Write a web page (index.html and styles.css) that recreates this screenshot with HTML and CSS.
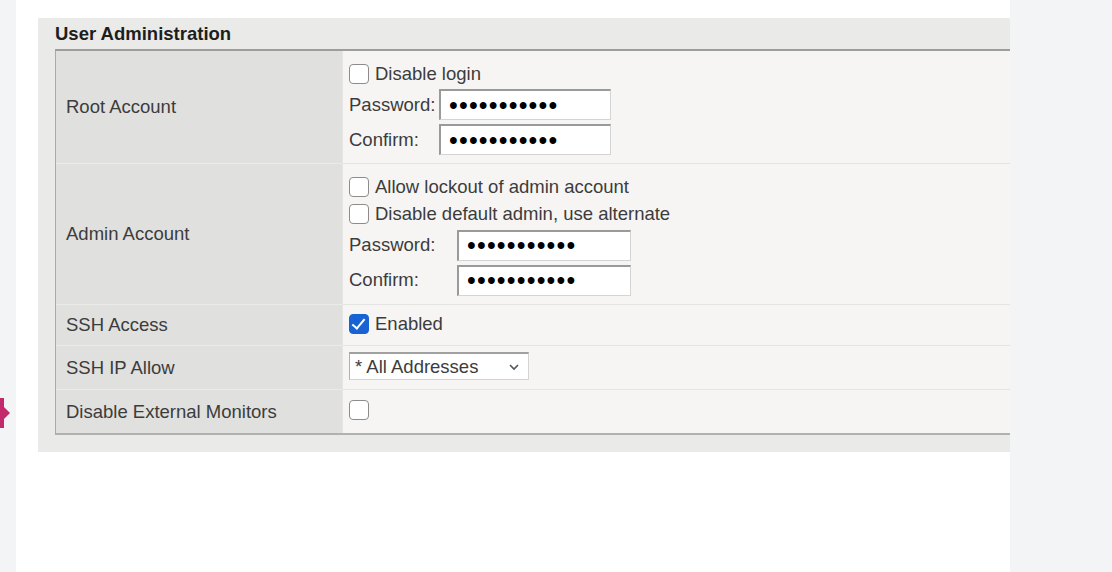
FILE: index.html
```html
<!DOCTYPE html>
<html lang="en">
<head>
    <meta charset="UTF-8">
    <title>User Administration</title>
    <link rel="stylesheet" href="styles.css">
</head>
<body>
    <div class="side-strip">
        <div class="marker">
            <span class="marker-bar"></span>
            <span class="marker-arrow"></span>
        </div>
    </div>
    <div class="main">
        <div class="panel">
            <div class="panel-title">User Administration</div>
            <div class="form-table">
                <div class="label-cell">Root Account</div>
                <div class="value-cell">
                    <label class="check-line"><input type="checkbox" class="check"> Disable login</label>
                    <div class="pw-line root"><span class="pw-label">Password:</span><input type="password" class="pw-input" value="secretpass1"></div>
                    <div class="pw-line root"><span class="pw-label">Confirm:</span><input type="password" class="pw-input" value="secretpass1"></div>
                </div>

                <div class="label-cell">Admin Account</div>
                <div class="value-cell">
                    <label class="check-line"><input type="checkbox" class="check"> Allow lockout of admin account</label>
                    <label class="check-line"><input type="checkbox" class="check"> Disable default admin, use alternate</label>
                    <div class="pw-line admin"><span class="pw-label">Password:</span><input type="password" class="pw-input" value="secretpass1"></div>
                    <div class="pw-line admin"><span class="pw-label">Confirm:</span><input type="password" class="pw-input" value="secretpass1"></div>
                </div>

                <div class="label-cell">SSH Access</div>
                <div class="value-cell single">
                    <label class="check-line"><input type="checkbox" class="check" checked> Enabled</label>
                </div>

                <div class="label-cell">SSH IP Allow</div>
                <div class="value-cell single">
                    <div class="select-wrap">
                        <select class="select">
                            <option>* All Addresses</option>
                            <option>LAN Only</option>
                        </select>
                        <svg class="chevron" width="12" height="8" viewBox="0 0 12 8"><path d="M2 2 L6 6 L10 2" fill="none" stroke="#555" stroke-width="1.6"/></svg>
                    </div>
                </div>

                <div class="label-cell last">Disable External Monitors</div>
                <div class="value-cell single last">
                    <label class="check-line"><input type="checkbox" class="check"></label>
                </div>
            </div>
        </div>
    </div>
    <div class="side-strip right"></div>
</body>
</html>
```

FILE: styles.css
```css
body {
    margin: 0;
    padding: 0;
    display: flex;
    height: 572px;
    overflow: hidden;
    font-family: "Liberation Sans", Arial, sans-serif;
    font-size: 18.5px;
    color: #3c3c3c;
    background-color: #f3f4f6;
}
.side-strip {
    width: 16px;
    background-color: #f3f4f6;
}
.side-strip.right {
    flex: 1;
}
.marker {
    display: flex;
    align-items: center;
    margin-top: 398px;
}
.marker-bar {
    width: 4px;
    height: 30px;
    background-color: #c22a6c;
}
.marker-arrow {
    width: 0;
    height: 0;
    border-top: 6px solid transparent;
    border-bottom: 6px solid transparent;
    border-left: 6px solid #c22a6c;
}
.main {
    width: 994px;
    background-color: white;
    overflow: hidden;
}
.panel {
    margin: 18px 0 0 22px;
    padding: 0 0 17px 17px;
    background-color: #eaeae8;
}
.panel-title {
    height: 31px;
    line-height: 31px;
    font-weight: bold;
    color: #1e1e1e;
}
.form-table {
    display: grid;
    grid-template-columns: 287px 1fr;
    grid-template-rows: 113px 141px 41px 44px 43px;
    border-top: 2px solid #9d9d9d;
    border-left: 1px solid #a9a9a9;
    border-bottom: 2px solid #b1b1b1;
}
.label-cell {
    display: flex;
    align-items: center;
    padding-left: 10px;
    background-color: #e0e0de;
    border-bottom: 1px solid #ebebea;
    border-right: 1px solid #e6e6e4;
}
.value-cell {
    display: flex;
    flex-direction: column;
    justify-content: center;
    padding: 3px 6px 0 6px;
    background-color: #f6f5f4;
    border-bottom: 1px solid #e4e4e2;
}
.value-cell.single {
    padding: 0 6px 3px 6px;
}
.label-cell.last, .value-cell.last {
    border-bottom: none;
}
.check-line {
    display: flex;
    align-items: center;
    height: 27px;
    gap: 6px;
}
.check {
    appearance: none;
    width: 20px;
    height: 20px;
    margin: 0;
    border: 1.5px solid #8c8c8c;
    border-radius: 4px;
    background-color: white;
    position: relative;
}
.check:checked {
    background-color: #1763d3;
    border-color: #1763d3;
}
.check:checked::after {
    content: "";
    position: absolute;
    left: 5px;
    top: 1px;
    width: 5px;
    height: 11px;
    border-right: 2.5px solid white;
    border-bottom: 2.5px solid white;
    transform: rotate(40deg);
}
.pw-line {
    display: flex;
    align-items: center;
    height: 35px;
}
.pw-line.root .pw-label {
    width: 90px;
}
.pw-line.admin .pw-label {
    width: 108px;
}
.pw-input {
    box-sizing: border-box;
    width: 172px;
    height: 31px;
    padding: 0 8px;
    font-family: "Liberation Sans", Arial, sans-serif;
    font-size: 25px;
    letter-spacing: 1.2px;
    color: black;
    background-color: white;
    border: 1px solid #d4d4d4;
    border-top: 2px solid #9a9a9a;
    border-left: 2px solid #9a9a9a;
}
.pw-line.admin .pw-input {
    width: 174px;
}
.select-wrap {
    position: relative;
    width: 180px;
}
.select {
    appearance: none;
    box-sizing: border-box;
    width: 180px;
    height: 28px;
    padding: 0 0 0 5px;
    font-family: "Liberation Sans", Arial, sans-serif;
    font-size: 18.5px;
    color: #3c3c3c;
    background-color: white;
    border: 1px solid #d4d4d4;
    border-top: 2px solid #a0a0a0;
    border-left: 1px solid #b0b0b0;
    border-radius: 0;
}
.chevron {
    position: absolute;
    right: 9px;
    top: 11px;
    pointer-events: none;
}
```
